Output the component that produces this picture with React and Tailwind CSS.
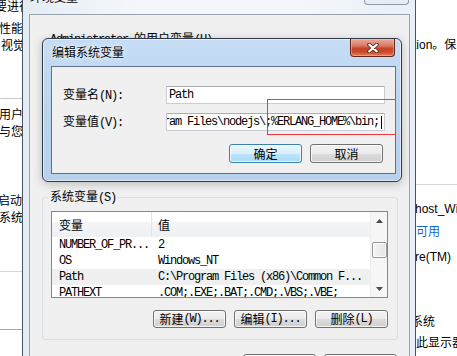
import React from "react";

const MONO = "font-['Liberation_Mono',monospace] text-[12px] tracking-[-1.2px]";

function Btn({ children, primary = false, size = "h-[19px] w-[73px]" }) {
  const base =
    "flex shrink-0 items-center justify-center rounded-[3px] border text-[12px] leading-[16px] text-black shadow-[inset_0_0_0_1px_rgba(255,255,255,0.75)]";
  const skin = primary
    ? "border-[#3c7fb1] bg-[linear-gradient(#eaf6fd,#d9f0fc_50%,#bee6fd_50%,#a7d9f5)]"
    : "border-[#707070] bg-[linear-gradient(#f2f2f2,#ebebeb_50%,#dddddd_50%,#cfcfcf)]";
  return <div className={`${base} ${skin} ${size}`}>{children}</div>;
}

function Arrow({ down = false }) {
  return (
    <svg width="7" height="4" viewBox="0 0 7 4">
      <polygon points={down ? "0,0 7,0 3.5,4" : "0,4 7,4 3.5,0"} fill="#4a4a4a" />
    </svg>
  );
}

function ListView() {
  const rows = [
    ["NUMBER_OF_PR...", "2", false],
    ["OS", "Windows_NT", false],
    ["Path", "C:\\Program Files (x86)\\Common F...", true],
    ["PATHEXT", ".COM;.EXE;.BAT;.CMD;.VBS;.VBE;", false],
  ];
  return (
    <div className="flex h-[87px] w-[337px] overflow-hidden border border-[#828790] bg-white">
      <div className="flex min-w-0 flex-1 flex-col overflow-hidden">
        <div className="flex h-[25px] shrink-0 bg-[linear-gradient(#ffffff,#ffffff_38%,#f4f5f7_40%,#eff0f2)]">
          <div className="w-[100px] shrink-0 border-r border-[#e3e5e8] pl-[7px] pt-[5px]">变量</div>
          <div className="pl-[6px] pt-[5px]">值</div>
        </div>
        {rows.map(([a, b, sel]) => (
          <div
            key={a}
            className={`flex h-[16px] shrink-0 items-center whitespace-nowrap ${sel ? "bg-[#f0f0f0]" : ""}`}
          >
            <div className={`w-[100px] shrink-0 pl-[7px] ${MONO}`}>{a}</div>
            <div className={`pl-[6px] ${MONO}`}>{b}</div>
          </div>
        ))}
      </div>
      <div className="flex w-[17px] shrink-0 flex-col border-l border-[#efefef] bg-[#f6f6f6]">
        <div className="flex h-[17px] shrink-0 items-center justify-center">
          <Arrow />
        </div>
        <div className="flex-1">
          <div className="ml-px mt-[13px] h-[16px] w-[15px] rounded-[2px] border border-[#979797] bg-[linear-gradient(90deg,#f4f4f4,#e4e4e4)] shadow-[inset_0_0_0_1px_rgba(255,255,255,0.8)]" />
        </div>
        <div className="flex h-[17px] shrink-0 items-center justify-center">
          <Arrow down />
        </div>
      </div>
    </div>
  );
}

function CloseBtn() {
  return (
    <div className="flex h-[18px] w-[45px] shrink-0 items-center justify-center rounded-b-[4px] border border-t-0 border-[#6b2418] bg-[linear-gradient(#e9ab9b,#d97a62_40%,#c5432a_55%,#c9482a_75%,#e0805c)] shadow-[inset_0_0_0_1px_rgba(255,205,185,0.45)]">
      <svg width="12" height="10" viewBox="0 0 12 10">
        <path d="M2.2 1.6L9.8 8.4M9.8 1.6L2.2 8.4" stroke="#5a1d12" strokeWidth="3.8" strokeLinecap="round" />
        <path d="M2.2 1.6L9.8 8.4M9.8 1.6L2.2 8.4" stroke="#ffffff" strokeWidth="2.1" strokeLinecap="round" />
      </svg>
    </div>
  );
}

function LeftBg() {
  return (
    <div className="flex w-[22px] shrink-0 flex-col overflow-hidden whitespace-nowrap">
      <div className="ml-[-5px] mt-[-3px] h-[17px] leading-[17px]">要进行</div>
      <div className="ml-[-1px] mt-[5px] h-[17px] leading-[17px]">性能</div>
      <div className="ml-[1px] h-[17px] leading-[17px]">视觉</div>
      <div className="mt-[45px] h-px w-full shrink-0 bg-[#c8c8c8]" />
      <div className="ml-[-1px] mt-[6px] h-[17px] leading-[17px]">用户配置</div>
      <div className="ml-[-1px] h-[17px] leading-[17px]">与您</div>
      <div className="ml-[-2px] mt-[52px] h-[17px] leading-[17px]">启动和</div>
      <div className="ml-[-1px] h-[17px] leading-[17px]">系统</div>
      <div className="mt-[46px] h-px w-full shrink-0 bg-[#d8d8d8]" />
      <div className="mt-[57px] h-px w-full shrink-0 bg-[#a8a8a8]" />
    </div>
  );
}

function RightBg() {
  return (
    <div className="flex w-[41px] shrink-0 flex-col overflow-hidden whitespace-nowrap font-['Liberation_Sans','Noto_Sans_CJK_SC',sans-serif]">
      <div className="ml-[-3px] mt-[37px] h-[17px] leading-[17px]">tion。保</div>
      <div className="mt-[130px] h-px w-full shrink-0 bg-[#d4d4d4]" />
      <div className="ml-[-1px] mt-[16px] h-[17px] leading-[17px]">host_Wi</div>
      <div className="mt-[6px] h-[17px] leading-[17px] text-[#1a66c8]">可用</div>
      <div className="ml-[-1px] mt-[8px] h-[17px] leading-[17px]">re(TM)</div>
      <div className="ml-[-5px] mt-[48px] h-[17px] leading-[17px]">系统</div>
      <div className="mt-[4px] h-[17px] leading-[17px]">此显示器</div>
    </div>
  );
}

function EnvDialog() {
  return (
    <div className="absolute left-[22px] top-[-21px] flex h-[400px] w-[394px] flex-col rounded-t-[6px] border border-[#4a545f] bg-[linear-gradient(90deg,#e4ecf4,#f4f7fa_30%,#f4f7fa_70%,#e8eff6)]">
      <div className="flex h-[34px] shrink-0 items-start justify-between pl-[7px] pr-[6px]">
        <div className="pt-[9px] [text-shadow:0_0_6px_#fff]">环境变量</div>
        <div className="h-[25px] w-[45px] rounded-b-[4px] border border-t-0 border-[#8f99a6] bg-[linear-gradient(#f7f9fb,#e6ebf1)]" />
      </div>
      <div className="ml-[6px] mr-[5px] flex flex-1 flex-col border border-[#9aa3ad] bg-[#f0f0f0]">
        <fieldset className="ml-[12px] mt-[15px] h-[150px] w-[356px] shrink-0 rounded-[3px] border border-[#d5dfe5] pl-[8px]">
          <legend className="ml-[-3px] px-[2px] leading-[16px]">
            <span className={MONO}>Administrator </span>的用户变量<span className={MONO}>(U)</span>
          </legend>
        </fieldset>
        <fieldset className="ml-[12px] mt-[8px] w-[356px] shrink-0 rounded-[3px] border border-[#d5dfe5] pb-[11px] pl-[8px] pr-[9px] pt-[5px]">
          <legend className="ml-[-3px] px-[2px] leading-[16px]">
            系统变量<span className={MONO}>(S)</span>
          </legend>
          <ListView />
          <div className="mt-[12px] flex justify-end gap-[8px]">
            <Btn size="h-[18px] w-[73px]">
              新建<span className={MONO}>(W)...</span>
            </Btn>
            <Btn size="h-[18px] w-[73px]">
              编辑<span className={MONO}>(I)...</span>
            </Btn>
            <Btn size="h-[18px] w-[73px]">
              删除<span className={MONO}>(L)</span>
            </Btn>
          </div>
        </fieldset>
        <div className="mt-[14px] flex justify-end gap-[8px] pr-[12px]">
          <Btn size="h-[23px] w-[73px]">确定</Btn>
          <Btn size="h-[23px] w-[73px]">取消</Btn>
        </div>
      </div>
    </div>
  );
}

function EditDialog() {
  return (
    <div className="absolute left-[42px] top-[38px] flex h-[144px] w-[360px] flex-col rounded-[6px] border border-[#2f3a48] bg-[linear-gradient(#c5dcf4,#bcd5ef_50%,#b7d0ec)] shadow-[inset_0_0_0_1px_rgba(255,255,255,0.55),0_2px_10px_rgba(0,0,0,0.22)]">
      <div className="flex h-[27px] shrink-0 items-start justify-between pl-[9px] pr-[6px]">
        <div className="pt-[5px] [text-shadow:0_0_6px_#fff,0_0_2px_#fff]">编辑系统变量</div>
        <CloseBtn />
      </div>
      <div className="mb-[7px] ml-[8px] mr-[5px] flex flex-1 flex-col border border-[#5e7186] bg-[#f0f0f0]">
        <div className="mt-[19px] flex items-center pl-[11px]">
          <div className="w-[103px] shrink-0 whitespace-nowrap">
            变量名<span className={MONO}>(N):</span>
          </div>
          <div className="flex h-[18px] w-[219px] items-center border border-[#c9ccd3] border-t-[#abadb3] bg-white pl-[2px]">
            <span className={MONO}>Path</span>
          </div>
        </div>
        <div className="mt-[9px] flex items-center pl-[11px]">
          <div className="w-[103px] shrink-0 whitespace-nowrap">
            变量值<span className={MONO}>(V):</span>
          </div>
          <div className="flex h-[18px] w-[219px] items-center justify-end overflow-hidden whitespace-nowrap border border-[#c9ccd3] border-t-[#abadb3] bg-white pr-[2px]">
            <span className={`shrink-0 ${MONO}`}>{"Program Files\\nodejs\\;%ERLANG_HOME%\\bin;"}</span>
            <span className="ml-[2px] h-[13px] w-px shrink-0 bg-black" />
          </div>
        </div>
        <div className="mt-[13px] flex justify-end gap-[8px] pr-[12px]">
          <Btn primary>确定</Btn>
          <Btn>取消</Btn>
        </div>
      </div>
    </div>
  );
}

export default function App() {
  return (
    <div className="relative h-[356px] w-[457px] overflow-hidden bg-white font-['Noto_Sans_CJK_SC',sans-serif] text-[12px] leading-[16px] text-black">
      <div className="flex h-full">
        <LeftBg />
        <div className="w-[394px] shrink-0" />
        <RightBg />
      </div>
      <EnvDialog />
      <EditDialog />
      <div className="absolute left-[267px] top-[99px] h-[36px] w-[129px] border border-[#ee3b3b]" />
    </div>
  );
}
